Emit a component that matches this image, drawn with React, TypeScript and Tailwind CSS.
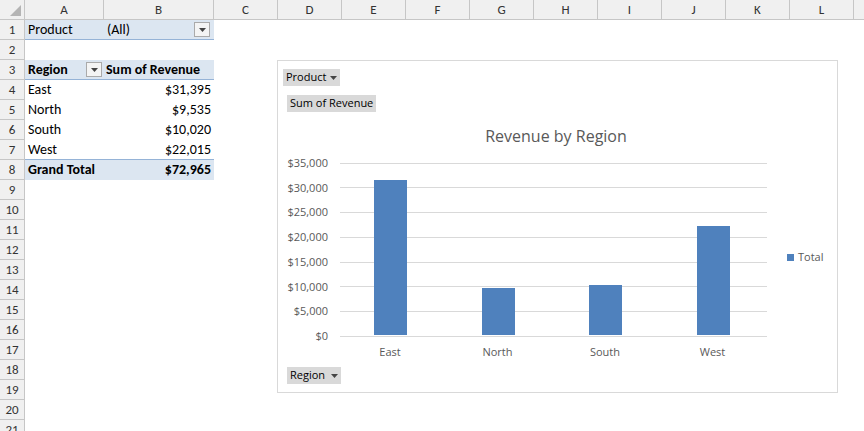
import React from "react";

const cols = [
  { l: "A", w: 79 }, { l: "B", w: 110 }, { l: "C", w: 64 }, { l: "D", w: 64 }, { l: "E", w: 64 },
  { l: "F", w: 64 }, { l: "G", w: 64 }, { l: "H", w: 64 }, { l: "I", w: 64 }, { l: "J", w: 64 },
  { l: "K", w: 64 }, { l: "L", w: 64 }, { l: "M", w: 64 },
];

const Arrow = () => (
  <svg width="7" height="4" viewBox="0 0 7 4"><path d="M0 0h7L3.5 4z" fill="#444" /></svg>
);

const DD = () => (
  <div className="w-[16px] h-[15px] border border-[#aaa] bg-[#f4f4f4] flex items-center justify-center">
    <Arrow />
  </div>
);

function cellContent(r: number, c: number): React.ReactNode {
  const data: Record<number, [string, string]> = {
    4: ["East", "$31,395"], 5: ["North", "$9,535"], 6: ["South", "$10,020"], 7: ["West", "$22,015"],
  };
  if (r === 1 && c === 0) return <span className="pl-[3px]">Product</span>;
  if (r === 1 && c === 1) return <div className="flex w-full items-center justify-between pr-[4px] pl-[3px]"><span>(All)</span><DD /></div>;
  if (r === 3 && c === 0) return <div className="flex w-full items-center justify-between pl-[3px] pr-[2px] font-bold"><span>Region</span><DD /></div>;
  if (r === 3 && c === 1) return <span className="font-bold pl-[2px] whitespace-nowrap">Sum of Revenue</span>;
  if (data[r] && c === 0) return <span className="pl-[3px]">{data[r][0]}</span>;
  if (data[r] && c === 1) return <span className="ml-auto pr-[3px]">{data[r][1]}</span>;
  if (r === 8 && c === 0) return <span className="pl-[3px] font-bold whitespace-nowrap">Grand Total</span>;
  if (r === 8 && c === 1) return <span className="ml-auto pr-[3px] font-bold">$72,965</span>;
  return null;
}

function cellClass(r: number, c: number) {
  const blue = c < 2 && (r === 1 || r === 3 || r === 8);
  let cls = "h-[20px] shrink-0 flex items-center border-b text-[14px] text-black overflow-hidden ";
  cls += blue ? "bg-[#dce6f1] " : "bg-white ";
  if (c < 2 && (r === 1 || r === 3 || r === 7)) cls += "border-b-[#95b3d7] ";
  else cls += blue ? "border-b-[#dce6f1] " : "border-b-white ";
  return cls;
}

const yTicks = ["$35,000", "$30,000", "$25,000", "$20,000", "$15,000", "$10,000", "$5,000", "$0"];
const bars = [
  { n: "East", v: 31395 }, { n: "North", v: 9535 }, { n: "South", v: 10020 }, { n: "West", v: 22015 },
];

export default function App() {
  return (
    <div className="relative w-[864px] h-[431px] overflow-hidden bg-white" style={{ fontFamily: "Calibri, Carlito, 'Liberation Sans', sans-serif" }}>
      <div className="flex h-[20px] bg-[#f0f0f0]">
        <div className="w-[25px] shrink-0 border-r border-b border-[#c6c6c6] relative">
          <svg className="absolute right-[3px] bottom-[3px]" width="11" height="11"><path d="M11 0V11H0z" fill="#b4b4b4" /></svg>
        </div>
        {cols.map((c) => (
          <div key={c.l} style={{ width: c.w }} className="shrink-0 border-r border-b border-[#c6c6c6] flex items-center justify-center text-[13px] text-[#333]">{c.l}</div>
        ))}
      </div>
      {Array.from({ length: 21 }, (_, i) => i + 1).map((r) => (
        <div key={r} className="flex">
          <div className="w-[25px] h-[20px] shrink-0 bg-[#f0f0f0] border-r border-b border-[#c6c6c6] flex items-center justify-center text-[13px] text-[#333]">{r}</div>
          {cols.map((c, ci) => (
            <div key={c.l} style={{ width: c.w }} className={cellClass(r, ci)}>{cellContent(r, ci)}</div>
          ))}
        </div>
      ))}

      <div className="absolute left-[277px] top-[60px] w-[561px] h-[333px] bg-white border border-[#d9d9d9] text-[11px] text-[#595959]" style={{ fontFamily: "'Segoe UI', 'Open Sans', 'Noto Sans', sans-serif" }}>
        <div className="absolute left-[5px] top-[8px] h-[17px] px-[3px] bg-[#d9d9d9] text-black flex items-center gap-[4px]">Product <Arrow /></div>
        <div className="absolute left-[9px] top-[34px] h-[17px] px-[3px] bg-[#d9d9d9] text-black flex items-center">Sum of Revenue</div>
        <div className="absolute left-[178px] w-[200px] top-[63px] text-center text-[16px] text-[#595959]">Revenue by Region</div>
        {yTicks.map((t, i) => (
          <div key={t} className="absolute left-0 flex items-center" style={{ top: 101 + i * 24.7 - 7 }}>
            <span className="w-[50px] text-right">{t}</span>
            <div className="ml-[12px] w-[427px] h-px bg-[#d9d9d9]" />
          </div>
        ))}
        {bars.map((b, i) => {
          const h = (b.v / 35000) * 173;
          return (
            <React.Fragment key={b.n}>
              <div className="absolute bg-[#4f81bd]" style={{ left: 96 + i * 107.5, width: 33, top: 274 - h, height: h }} />
              <div className="absolute w-[80px] text-center" style={{ left: 72 + i * 107.5, top: 283 }}>{b.n}</div>
            </React.Fragment>
          );
        })}
        <div className="absolute left-[509px] top-[188px] flex items-center gap-[4px]">
          <div className="w-[7px] h-[7px] bg-[#4f81bd]" />Total
        </div>
        <div className="absolute left-[9px] top-[306px] h-[17px] px-[3px] bg-[#d9d9d9] text-black flex items-center gap-[6px]">Region <Arrow /></div>
      </div>
    </div>
  );
}
